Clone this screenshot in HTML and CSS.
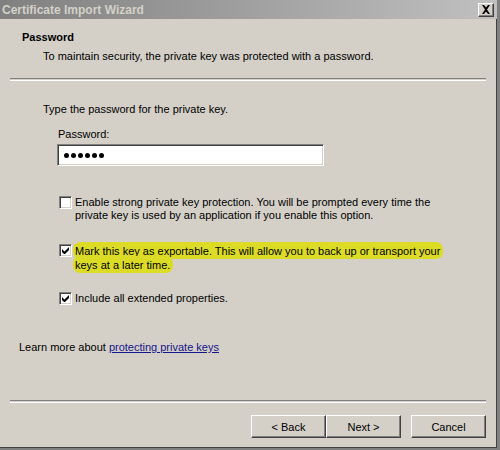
FILE: index.html
```html
<!DOCTYPE html>
<html>
<head>
<meta charset="utf-8">
<link rel="stylesheet" href="styles.css">
</head>
<body>
<div class="window">
  <div class="titlebar">
    <span class="title">Certificate Import Wizard</span>
    <span class="close"><svg width="10" height="9" viewBox="0 0 10 9"><path d="M1 0h2l2 2.5L7 0h2L6 4.5 9 9H7L5 6.5 3 9H1l3-4.5z" fill="#000"/></svg></span>
  </div>
  <div class="header">
    <div class="h-title">Password</div>
    <div class="h-sub">To maintain security, the private key was protected with a password.</div>
  </div>
  <div class="sep"></div>
  <div class="content">
    <div class="prompt">Type the password for the private key.</div>
    <div class="label">Password:</div>
    <div class="input"><span class="dots"><i></i><i></i><i></i><i></i><i></i><i></i></span></div>
    <div class="opt opt1">
      <span class="cb"></span>
      <span class="opt-text">Enable strong private key protection. You will be prompted every time the<br>private key is used by an application if you enable this option.</span>
    </div>
    <div class="opt opt2">
      <span class="cb checked"><svg width="7" height="7" viewBox="0 0 7 7"><path d="M0 2v3l2 2h1l4-4V0L2.5 4.5z" fill="#000"/></svg></span>
      <span class="opt-text"><span class="hl">Mark this key as exportable. This will allow you to back up or transport your<br>keys at a later time.</span></span>
    </div>
    <div class="opt opt3">
      <span class="cb checked"><svg width="7" height="7" viewBox="0 0 7 7"><path d="M0 2v3l2 2h1l4-4V0L2.5 4.5z" fill="#000"/></svg></span>
      <span class="opt-text">Include all extended properties.</span>
    </div>
  </div>
  <div class="learn">Learn more about <a class="link">protecting private keys</a></div>
  <div class="sep sep-bottom"></div>
  <div class="buttons">
    <button class="btn">&lt; Back</button>
    <button class="btn">Next &gt;</button>
    <button class="btn cancel">Cancel</button>
  </div>
</div>
</body>
</html>
```
FILE: styles.css
```css
html, body {
  margin: 0;
  padding: 0;
  background: #d4d0c8;
}
body {
  font-family: "Liberation Sans", Arial, sans-serif;
  font-size: 11px;
  color: #000;
}
.window {
  width: 497px;
  height: 448px;
  border-right: 3px solid #808080;
  border-bottom: 2px solid #808080;
  box-shadow: inset -1px -1px 0 #404040;
  position: relative;
}
.titlebar {
  height: 19px;
  background: linear-gradient(to right, #808080, #c0c0c0);
  display: flex;
  align-items: center;
  justify-content: space-between;
  padding: 0 3px 0 2px;
}
.title {
  color: #d4d0c8;
  font-weight: bold;
  font-size: 12px;
}
.close {
  width: 16px;
  height: 14px;
  background: #d4d0c8;
  box-sizing: border-box;
  border-top: 1px solid #fff;
  border-left: 1px solid #fff;
  border-right: 1px solid #404040;
  border-bottom: 1px solid #404040;
  box-shadow: inset -1px -1px 0 #808080;
  display: flex;
  align-items: center;
  justify-content: center;
}
.header {
  padding-top: 12px;
}
.h-title {
  font-weight: bold;
  line-height: 13px;
  padding-left: 22px;
}
.h-sub {
  line-height: 13px;
  margin-top: 6px;
  padding-left: 43px;
}
.sep {
  margin: 15px 0 0 10px;
  width: 476px;
  height: 1px;
  border-top: 1px solid #808080;
  border-bottom: 1px solid #fff;
}
.content {
  padding-top: 22px;
}
.prompt {
  padding-left: 43px;
  line-height: 13px;
}
.label {
  padding-left: 58px;
  margin-top: 12px;
  line-height: 13px;
}
.input {
  margin: 3px 0 0 57px;
  width: 267px;
  height: 22px;
  box-sizing: border-box;
  background: #fff;
  border-top: 1px solid #808080;
  border-left: 1px solid #808080;
  border-right: 1px solid #fff;
  border-bottom: 1px solid #fff;
  box-shadow: inset 1px 1px 0 #404040, inset -1px -1px 0 #d4d0c8;
  display: flex;
  align-items: center;
  padding-left: 6px;
}
.dots {
  display: flex;
  gap: 2px;
}
.dots i {
  width: 5px;
  height: 5px;
  border-radius: 50%;
  background: #000;
}
.opt {
  display: flex;
  align-items: flex-start;
  padding-left: 59px;
  line-height: 13px;
}
.opt1 { margin-top: 30px; }
.opt2 { margin-top: 22px; }
.opt3 { margin-top: 20px; }
.opt2 .opt-text { line-height: 14px; }
.cb {
  width: 13px;
  height: 13px;
  box-sizing: border-box;
  background: #fff;
  border-top: 1px solid #808080;
  border-left: 1px solid #808080;
  border-right: 1px solid #fff;
  border-bottom: 1px solid #fff;
  box-shadow: inset 1px 1px 0 #404040, inset -1px -1px 0 #d4d0c8;
  flex: none;
  display: flex;
  align-items: center;
  justify-content: center;
  margin-right: 3px;
}
.opt-text {
  white-space: nowrap;
}
.hl {
  background: #dcdc26;
  border-radius: 7px;
  padding: 3px 3px 2px 2px;
  margin-left: -2px;
  -webkit-box-decoration-break: clone;
  box-decoration-break: clone;
}
.learn {
  margin-top: 36px;
  padding-left: 19px;
  line-height: 13px;
}
.link {
  color: #14148c;
  text-decoration: underline;
}
.sep-bottom {
  margin-top: 46px;
}
.buttons {
  display: flex;
  justify-content: flex-end;
  padding: 12px 11px 0 0;
}
.btn {
  width: 75px;
  height: 23px;
  font-family: "Liberation Sans", Arial, sans-serif;
  font-size: 11px;
  color: #000;
  background: #d4d0c8;
  box-sizing: border-box;
  border-top: 1px solid #fff;
  border-left: 1px solid #fff;
  border-right: 1px solid #404040;
  border-bottom: 1px solid #404040;
  box-shadow: inset -1px -1px 0 #808080;
  padding: 0;
}
.cancel {
  margin-left: 10px;
}
```
